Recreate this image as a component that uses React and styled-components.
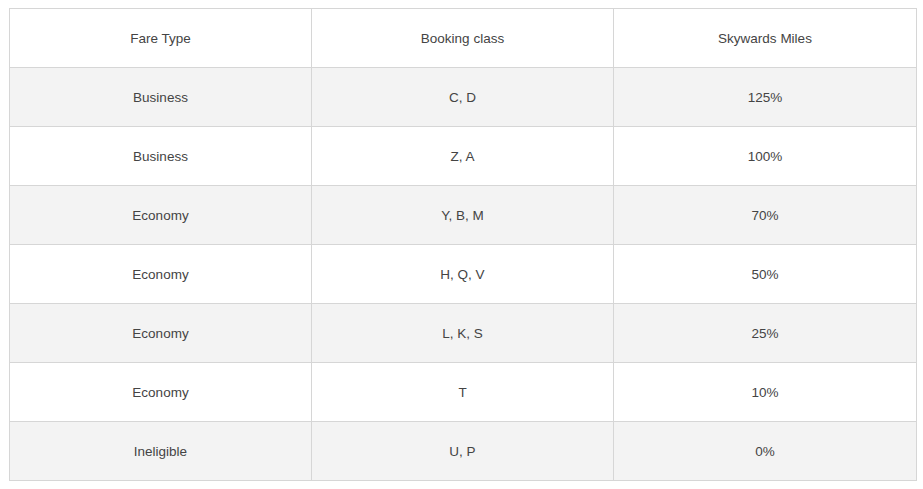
import React from "react";
import styled, { createGlobalStyle } from "styled-components";

const Global = createGlobalStyle`
  html, body { margin: 0; padding: 0; background: #fff; }
  body { padding: 8px 7px 0 9px; font-family: "Liberation Sans", Arial, sans-serif; }
`;

const Table = styled.table`
  width: 907px;
  border-collapse: collapse;
  table-layout: fixed;
  font-size: 13.5px;
  color: #444;
`;

const Row = styled.tr`
  background: ${(p) => (p.$striped ? "#f3f3f3" : "#fff")};
`;

const Cell = styled.td`
  border: 1px solid #d6d6d6;
  height: 59px;
  padding: 0;
  text-align: center;
  vertical-align: middle;
  box-sizing: border-box;
`;

const Col = styled.col`
  width: ${(p) => p.$w}px;
`;

const rows = [
  ["Business", "C, D", "125%"],
  ["Business", "Z, A", "100%"],
  ["Economy", "Y, B, M", "70%"],
  ["Economy", "H, Q, V", "50%"],
  ["Economy", "L, K, S", "25%"],
  ["Economy", "T", "10%"],
  ["Ineligible", "U, P", "0%"],
];

export default function App() {
  return (
    <>
      <Global />
      <Table>
        <colgroup>
          <Col $w={302} />
          <Col $w={302} />
          <Col $w={303} />
        </colgroup>
        <tbody>
          <Row>
            <Cell>Fare Type</Cell>
            <Cell>Booking class</Cell>
            <Cell>Skywards Miles</Cell>
          </Row>
          {rows.map((r, i) => (
            <Row key={i} $striped={i % 2 === 0}>
              {r.map((c, j) => (
                <Cell key={j}>{c}</Cell>
              ))}
            </Row>
          ))}
        </tbody>
      </Table>
    </>
  );
}
